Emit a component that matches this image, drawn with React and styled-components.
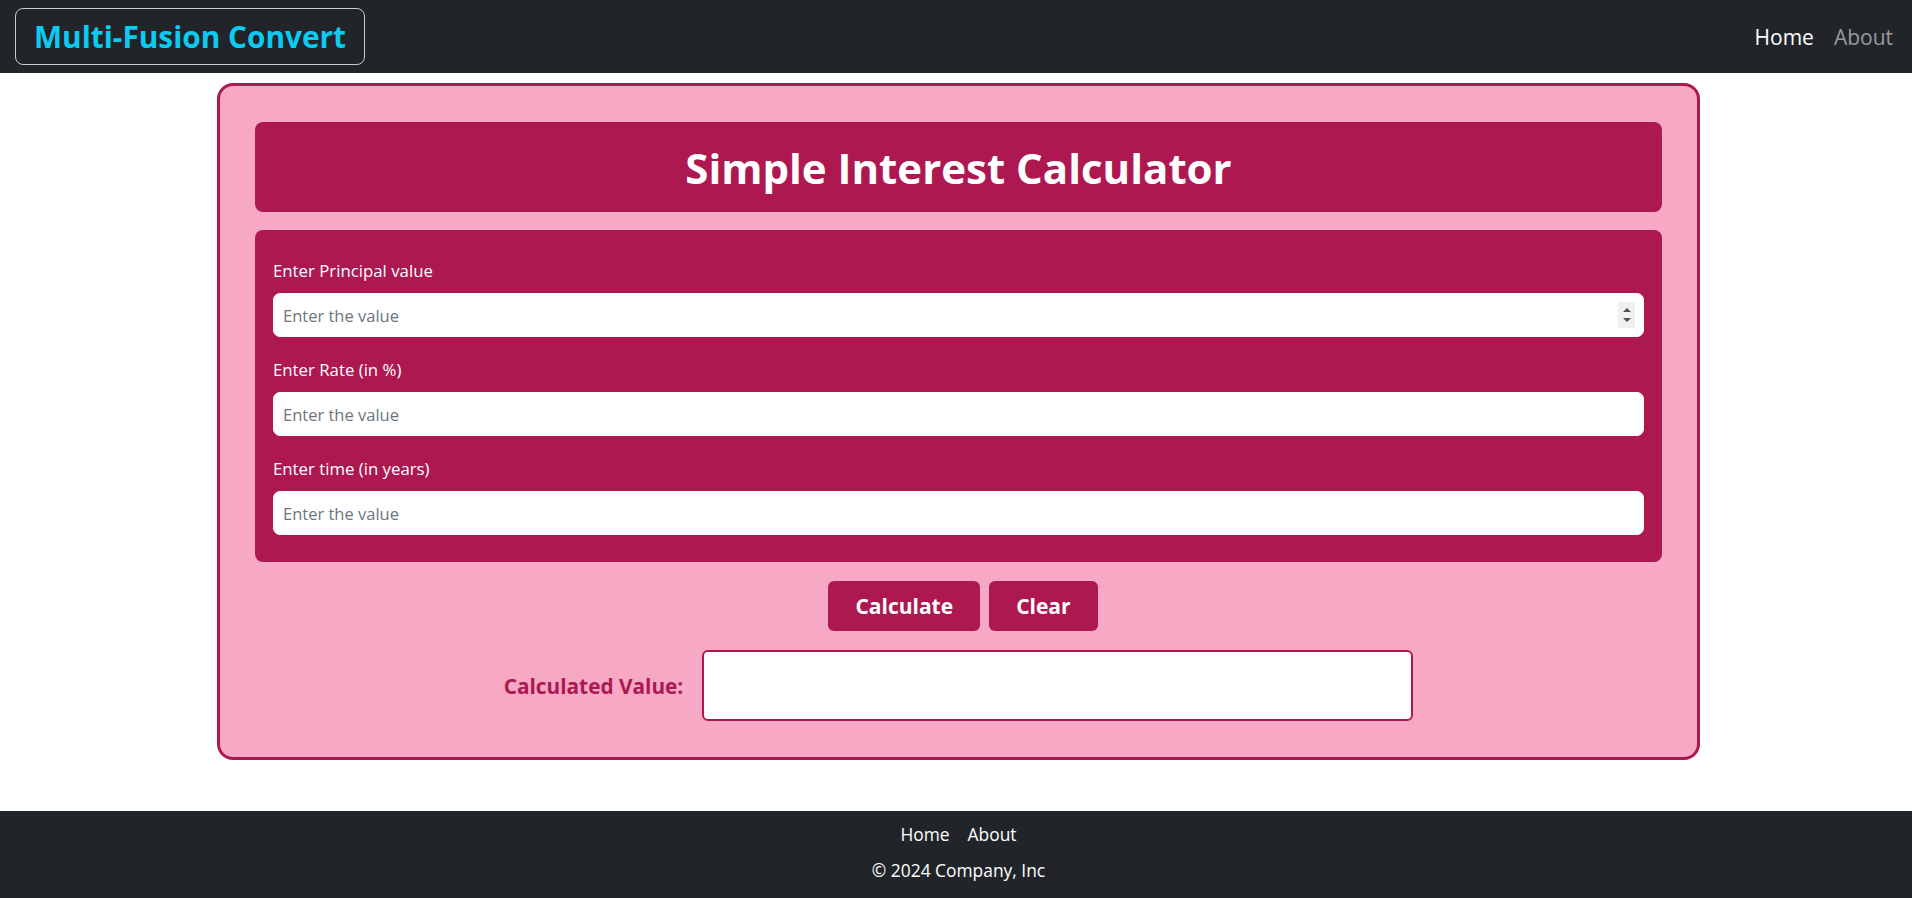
import React, { useState } from "react";
import styled, { createGlobalStyle } from "styled-components";

const GlobalStyle = createGlobalStyle`
  * {
    box-sizing: border-box;
  }
  body {
    margin: 0;
    background: #ffffff;
    font-family: "Open Sans", "Noto Sans", sans-serif;
  }
`;

const crimson = "#ad1850";

export default function App() {
  const [principal, setPrincipal] = useState("");
  const [rate, setRate] = useState("");
  const [time, setTime] = useState("");
  const [result, setResult] = useState("");

  const calculate = () => {
    const p = parseFloat(principal);
    const r = parseFloat(rate);
    const t = parseFloat(time);
    if (isNaN(p) || isNaN(r) || isNaN(t)) return;
    setResult(((p * r * t) / 100).toFixed(2));
  };

  const clear = () => {
    setPrincipal("");
    setRate("");
    setTime("");
    setResult("");
  };

  return (
    <>
      <GlobalStyle />
      <Nav>
        <Brand>Multi-Fusion Convert</Brand>
        <NavLinks>
          <NavLink $active>Home</NavLink>
          <NavLink>About</NavLink>
        </NavLinks>
      </Nav>

      <Main>
        <Card>
          <Heading>
            <h1>Simple Interest Calculator</h1>
          </Heading>

          <FormBox>
            <Field>
              <label>Enter Principal value</label>
              <InputWrap>
                <Input
                  type="number"
                  placeholder="Enter the value"
                  value={principal}
                  onChange={(e) => setPrincipal(e.target.value)}
                />
                <Spinner>
                  <span className="up" />
                  <span className="down" />
                </Spinner>
              </InputWrap>
            </Field>
            <Field>
              <label>Enter Rate (in %)</label>
              <Input
                type="text"
                placeholder="Enter the value"
                value={rate}
                onChange={(e) => setRate(e.target.value)}
              />
            </Field>
            <Field>
              <label>Enter time (in years)</label>
              <Input
                type="text"
                placeholder="Enter the value"
                value={time}
                onChange={(e) => setTime(e.target.value)}
              />
            </Field>
          </FormBox>

          <Buttons>
            <Button onClick={calculate}>Calculate</Button>
            <Button onClick={clear}>Clear</Button>
          </Buttons>

          <ResultRow>
            <span>Calculated Value:</span>
            <ResultBox>{result}</ResultBox>
          </ResultRow>
        </Card>
      </Main>

      <Footer>
        <FooterLinks>
          <a>Home</a>
          <a>About</a>
        </FooterLinks>
        <p>© 2024 Company, Inc</p>
      </Footer>
    </>
  );
}

const Nav = styled.nav`
  display: flex;
  justify-content: space-between;
  align-items: center;
  height: 73px;
  padding: 0 19px 0 15px;
  background-color: #212529;
`;

const Brand = styled.div`
  display: flex;
  align-items: center;
  height: 57px;
  padding: 0 18px;
  border: 1px solid #c9cbcd;
  border-radius: 8px;
  color: #0dcaf0;
  font-size: 29.8px;
  font-weight: 700;
`;

const NavLinks = styled.div`
  display: flex;
  gap: 20px;
`;

const NavLink = styled.a`
  font-size: 21px;
  color: ${(p) => (p.$active ? "#ffffff" : "rgba(255, 255, 255, 0.55)")};
  cursor: pointer;
`;

const Main = styled.main`
  display: flex;
  justify-content: center;
  padding: 10px 0 51px 5px;
`;

const Card = styled.div`
  width: 1483px;
  padding: 36px 35px;
  background-color: #f6a8c4;
  border: 3px solid ${crimson};
  border-radius: 16px;
  display: flex;
  flex-direction: column;
`;

const Heading = styled.div`
  display: flex;
  align-items: center;
  justify-content: center;
  height: 90px;
  background-color: ${crimson};
  border-radius: 8px;
  h1 {
    margin: 0;
    color: #ffffff;
    font-size: 42px;
    font-weight: 700;
  }
`;

const FormBox = styled.div`
  display: flex;
  flex-direction: column;
  gap: 21px;
  margin-top: 18px;
  padding: 29px 18px 27px;
  background-color: ${crimson};
  border-radius: 8px;
`;

const Field = styled.div`
  display: flex;
  flex-direction: column;
  gap: 10px;
  label {
    color: #ffffff;
    font-size: 16.8px;
    line-height: 24px;
  }
`;

const InputWrap = styled.div`
  position: relative;
`;

const Input = styled.input`
  width: 100%;
  height: 44px;
  padding: 0 9px;
  border: 1px solid #ffffff;
  border-radius: 7px;
  background: #ffffff;
  font-family: "Open Sans", "Noto Sans", sans-serif;
  font-size: 16.5px;
  color: #212529;
  &::placeholder {
    color: #6c757d;
  }
  &:focus {
    outline: none;
  }
  &::-webkit-inner-spin-button,
  &::-webkit-outer-spin-button {
    -webkit-appearance: none;
    margin: 0;
  }
`;

const Spinner = styled.span`
  position: absolute;
  top: 9px;
  right: 9px;
  width: 17px;
  height: 26px;
  background: #efefef;
  display: flex;
  flex-direction: column;
  align-items: center;
  justify-content: center;
  gap: 6px;
  pointer-events: none;
  span {
    width: 0;
    height: 0;
    border-left: 4px solid transparent;
    border-right: 4px solid transparent;
  }
  .up {
    border-bottom: 4px solid #505050;
  }
  .down {
    border-top: 4px solid #505050;
  }
`;

const Buttons = styled.div`
  display: flex;
  justify-content: center;
  gap: 9px;
  margin-top: 19px;
  padding-left: 9px;
`;

const Button = styled.button`
  height: 50px;
  padding: 0 27px;
  border: none;
  border-radius: 6px;
  background-color: ${crimson};
  color: #ffffff;
  font-family: "Open Sans", "Noto Sans", sans-serif;
  font-size: 21px;
  font-weight: 700;
  cursor: pointer;
`;

const ResultRow = styled.div`
  display: flex;
  align-items: center;
  justify-content: center;
  gap: 19px;
  margin-top: 19px;
  span {
    color: ${crimson};
    font-size: 20.8px;
    font-weight: 700;
  }
`;

const ResultBox = styled.div`
  width: 711px;
  height: 71px;
  padding: 10px;
  background: #ffffff;
  border: 2px solid ${crimson};
  border-radius: 6px;
  font-size: 20px;
`;

const Footer = styled.footer`
  background-color: #212529;
  color: #ffffff;
  text-align: center;
  padding: 11px 0 16px 5px;
  font-size: 17.4px;
  line-height: 24px;
  p {
    margin: 12px 0 0;
  }
`;

const FooterLinks = styled.div`
  display: flex;
  justify-content: center;
  gap: 18px;
  a {
    color: #ffffff;
    cursor: pointer;
  }
`;
